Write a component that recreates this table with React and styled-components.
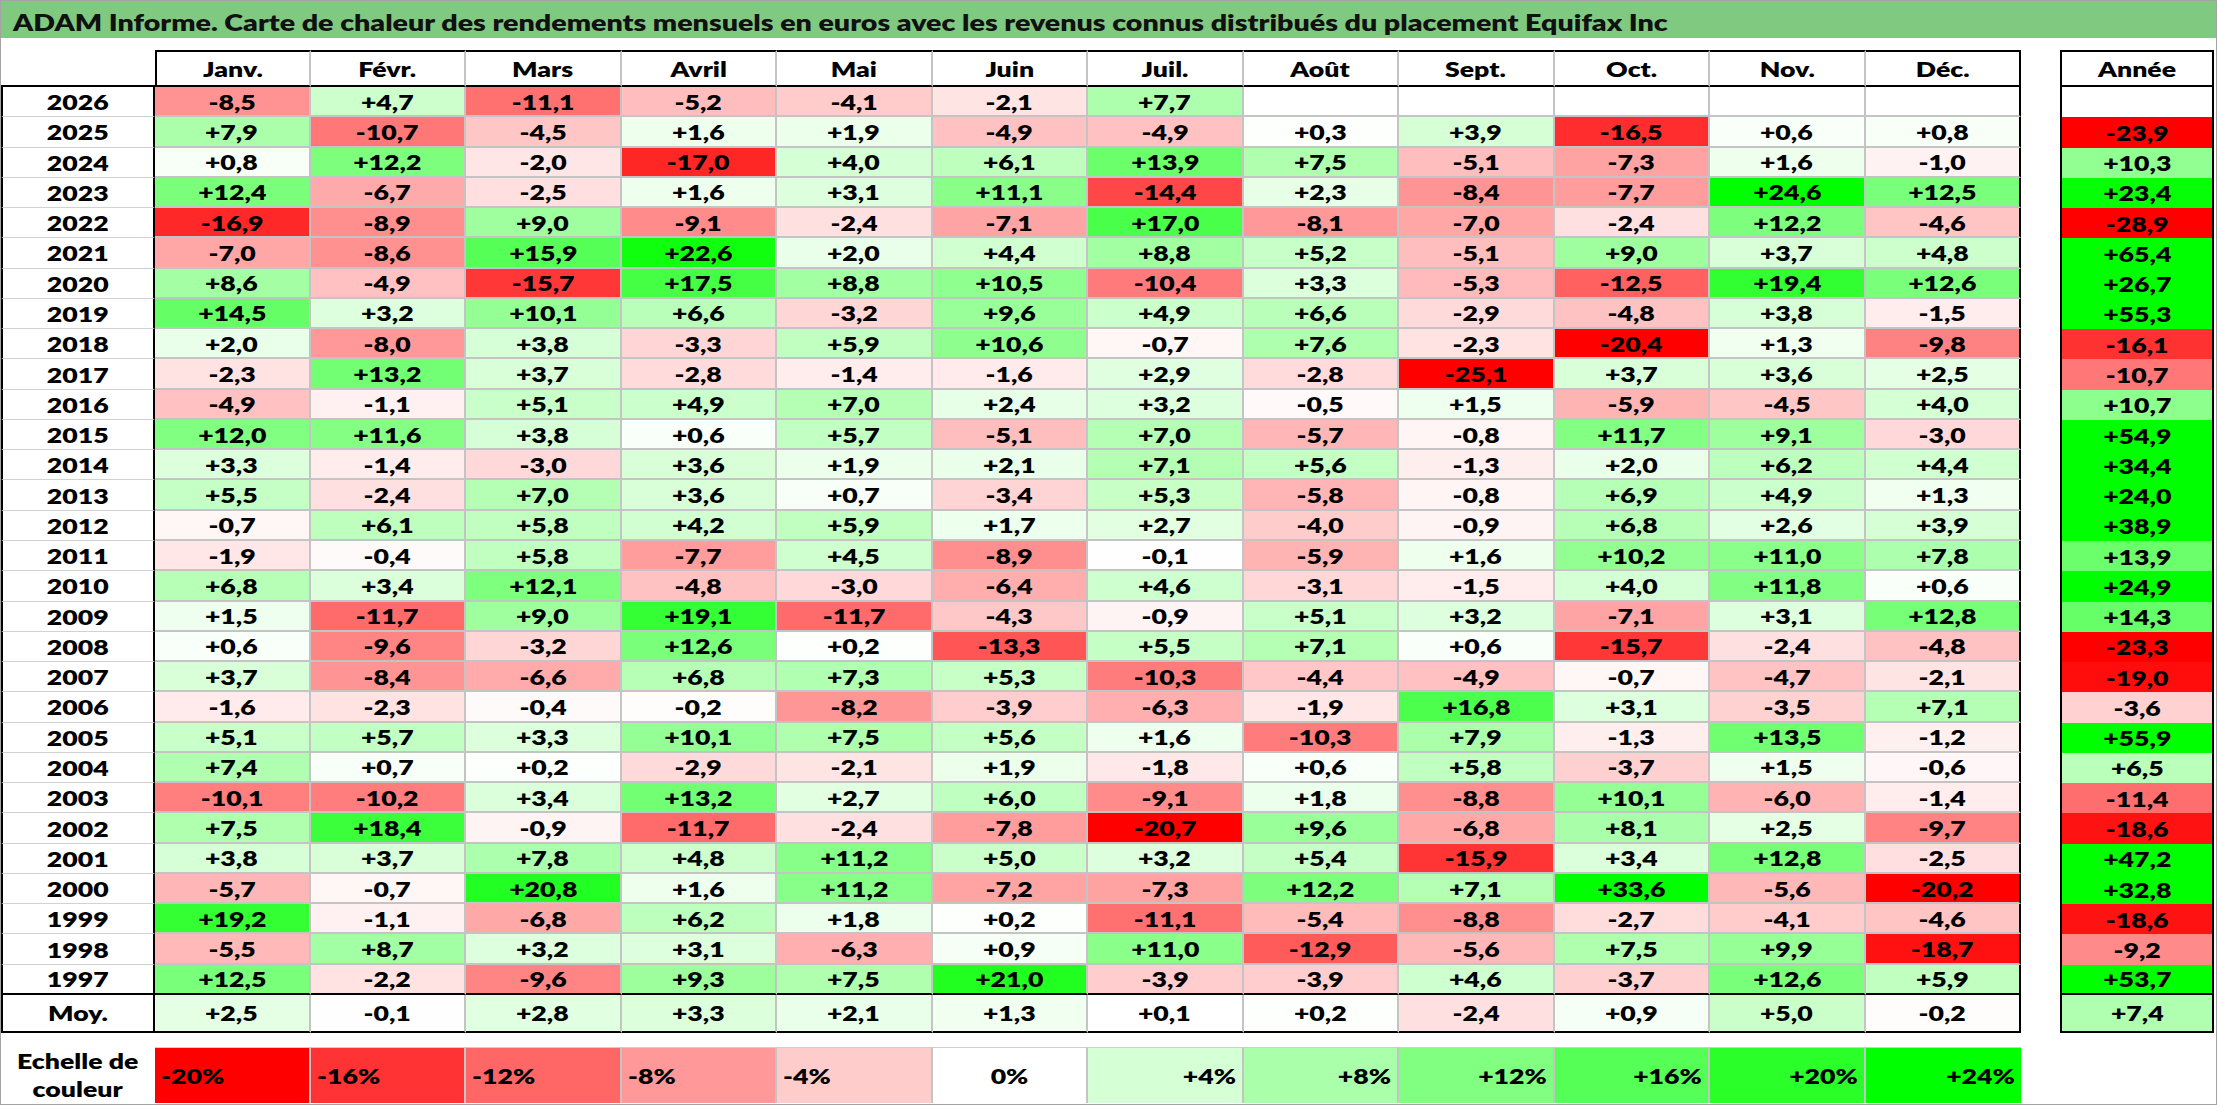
import React from 'react';
import styled, { createGlobalStyle } from 'styled-components';

const GlobalStyle = createGlobalStyle`
  html, body { margin: 0; padding: 0; background: #ffffff; }
  body { font-family: Lato, "Liberation Sans", sans-serif; color: #000; }
`;

const BLACK = '2px solid #000';
const GRAY = '2px solid #c4c4c4';
const LIGHT = '1px solid #d2d2d2';

const MONTHS = ['Janv.', 'Févr.', 'Mars', 'Avril', 'Mai', 'Juin', 'Juil.', 'Août', 'Sept.', 'Oct.', 'Nov.', 'Déc.'];

const ROWS = [
  ['2026', '-8,5 +4,7 -11,1 -5,2 -4,1 -2,1 +7,7 _ _ _ _ _ _'],
  ['2025', '+7,9 -10,7 -4,5 +1,6 +1,9 -4,9 -4,9 +0,3 +3,9 -16,5 +0,6 +0,8 -23,9'],
  ['2024', '+0,8 +12,2 -2,0 -17,0 +4,0 +6,1 +13,9 +7,5 -5,1 -7,3 +1,6 -1,0 +10,3'],
  ['2023', '+12,4 -6,7 -2,5 +1,6 +3,1 +11,1 -14,4 +2,3 -8,4 -7,7 +24,6 +12,5 +23,4'],
  ['2022', '-16,9 -8,9 +9,0 -9,1 -2,4 -7,1 +17,0 -8,1 -7,0 -2,4 +12,2 -4,6 -28,9'],
  ['2021', '-7,0 -8,6 +15,9 +22,6 +2,0 +4,4 +8,8 +5,2 -5,1 +9,0 +3,7 +4,8 +65,4'],
  ['2020', '+8,6 -4,9 -15,7 +17,5 +8,8 +10,5 -10,4 +3,3 -5,3 -12,5 +19,4 +12,6 +26,7'],
  ['2019', '+14,5 +3,2 +10,1 +6,6 -3,2 +9,6 +4,9 +6,6 -2,9 -4,8 +3,8 -1,5 +55,3'],
  ['2018', '+2,0 -8,0 +3,8 -3,3 +5,9 +10,6 -0,7 +7,6 -2,3 -20,4 +1,3 -9,8 -16,1'],
  ['2017', '-2,3 +13,2 +3,7 -2,8 -1,4 -1,6 +2,9 -2,8 -25,1 +3,7 +3,6 +2,5 -10,7'],
  ['2016', '-4,9 -1,1 +5,1 +4,9 +7,0 +2,4 +3,2 -0,5 +1,5 -5,9 -4,5 +4,0 +10,7'],
  ['2015', '+12,0 +11,6 +3,8 +0,6 +5,7 -5,1 +7,0 -5,7 -0,8 +11,7 +9,1 -3,0 +54,9'],
  ['2014', '+3,3 -1,4 -3,0 +3,6 +1,9 +2,1 +7,1 +5,6 -1,3 +2,0 +6,2 +4,4 +34,4'],
  ['2013', '+5,5 -2,4 +7,0 +3,6 +0,7 -3,4 +5,3 -5,8 -0,8 +6,9 +4,9 +1,3 +24,0'],
  ['2012', '-0,7 +6,1 +5,8 +4,2 +5,9 +1,7 +2,7 -4,0 -0,9 +6,8 +2,6 +3,9 +38,9'],
  ['2011', '-1,9 -0,4 +5,8 -7,7 +4,5 -8,9 -0,1 -5,9 +1,6 +10,2 +11,0 +7,8 +13,9'],
  ['2010', '+6,8 +3,4 +12,1 -4,8 -3,0 -6,4 +4,6 -3,1 -1,5 +4,0 +11,8 +0,6 +24,9'],
  ['2009', '+1,5 -11,7 +9,0 +19,1 -11,7 -4,3 -0,9 +5,1 +3,2 -7,1 +3,1 +12,8 +14,3'],
  ['2008', '+0,6 -9,6 -3,2 +12,6 +0,2 -13,3 +5,5 +7,1 +0,6 -15,7 -2,4 -4,8 -23,3'],
  ['2007', '+3,7 -8,4 -6,6 +6,8 +7,3 +5,3 -10,3 -4,4 -4,9 -0,7 -4,7 -2,1 -19,0'],
  ['2006', '-1,6 -2,3 -0,4 -0,2 -8,2 -3,9 -6,3 -1,9 +16,8 +3,1 -3,5 +7,1 -3,6'],
  ['2005', '+5,1 +5,7 +3,3 +10,1 +7,5 +5,6 +1,6 -10,3 +7,9 -1,3 +13,5 -1,2 +55,9'],
  ['2004', '+7,4 +0,7 +0,2 -2,9 -2,1 +1,9 -1,8 +0,6 +5,8 -3,7 +1,5 -0,6 +6,5'],
  ['2003', '-10,1 -10,2 +3,4 +13,2 +2,7 +6,0 -9,1 +1,8 -8,8 +10,1 -6,0 -1,4 -11,4'],
  ['2002', '+7,5 +18,4 -0,9 -11,7 -2,4 -7,8 -20,7 +9,6 -6,8 +8,1 +2,5 -9,7 -18,6'],
  ['2001', '+3,8 +3,7 +7,8 +4,8 +11,2 +5,0 +3,2 +5,4 -15,9 +3,4 +12,8 -2,5 +47,2'],
  ['2000', '-5,7 -0,7 +20,8 +1,6 +11,2 -7,2 -7,3 +12,2 +7,1 +33,6 -5,6 -20,2 +32,8'],
  ['1999', '+19,2 -1,1 -6,8 +6,2 +1,8 +0,2 -11,1 -5,4 -8,8 -2,7 -4,1 -4,6 -18,6'],
  ['1998', '-5,5 +8,7 +3,2 +3,1 -6,3 +0,9 +11,0 -12,9 -5,6 +7,5 +9,9 -18,7 -9,2'],
  ['1997', '+12,5 -2,2 -9,6 +9,3 +7,5 +21,0 -3,9 -3,9 +4,6 -3,7 +12,6 +5,9 +53,7'],
  ['Moy.', '+2,5 -0,1 +2,8 +3,3 +2,1 +1,3 +0,1 +0,2 -2,4 +0,9 +5,0 -0,2 +7,4'],
].map(([label, s]) => ({ label, values: s.split(' ').map((v) => (v === '_' ? '' : v)) }));

const LEGEND = [-20, -16, -12, -8, -4, 0, 4, 8, 12, 16, 20, 24];

const heat = (v) => {
  if (v === null || Number.isNaN(v)) return '#ffffff';
  if (v < 0) {
    const t = Math.min(-v / 20, 1);
    const c = Math.round(255 * (1 - t));
    return `rgb(255,${c},${c})`;
  }
  const t = Math.min(v / 24, 1);
  const c = Math.round(255 * (1 - t));
  return `rgb(${c},255,${c})`;
};

const num = (s) => (s === '' ? null : parseFloat(s.replace(',', '.')));

const Page = styled.div`
  width: 2217px;
  height: 1105px;
  box-sizing: border-box;
  border: 1px solid #a3a3a3;
  display: flex;
  flex-direction: column;
  background: #ffffff;
  overflow: hidden;
`;

const TitleBar = styled.div`
  height: 37px;
  flex: none;
  background: #80c980;
  display: flex;
  align-items: center;
  padding: 6px 0 0 12px;
  box-sizing: border-box;
  font-size: 22px;
  font-weight: 800;
  color: #111;
  white-space: nowrap;
`;

const Stretch = styled.span`
  display: inline-block;
  white-space: nowrap;
  transform: scaleX(1.3);
  transform-origin: ${(p) => p.$origin || 'center'};
`;

const Grid = styled.div`
  margin-top: 12px;
  display: grid;
  grid-template-columns: 154px repeat(12, 155.5px) 39px 154px;
  grid-template-rows: 37px repeat(30, 30.27px) 38px 14px 56px;
  font-size: 20.5px;
  font-weight: 800;
`;

const BaseCell = styled.div`
  box-sizing: border-box;
  display: flex;
  align-items: center;
  justify-content: center;
  overflow: visible;
  padding-top: 1px;
`;

const Corner = styled(BaseCell)`
  border-bottom: ${BLACK};
`;

const MonthHead = styled(BaseCell)`
  border-top: ${BLACK};
  border-bottom: ${BLACK};
  border-left: ${(p) => (p.$first ? BLACK : 'none')};
  border-right: ${(p) => (p.$last ? BLACK : GRAY)};
`;

const Spacer = styled.div``;

const TotalHead = styled(BaseCell)`
  border: ${BLACK};
`;

const YearLabel = styled(BaseCell)`
  border-left: ${BLACK};
  border-right: ${BLACK};
  border-bottom: ${(p) => (p.$dark ? BLACK : LIGHT)};
`;

const ValueCell = styled(BaseCell)`
  background: ${(p) => p.$bg};
  border-right: ${(p) => (p.$last ? BLACK : GRAY)};
  border-bottom: ${(p) => (p.$dark ? BLACK : GRAY)};
`;

const TotalCell = styled(BaseCell)`
  background: ${(p) => p.$bg};
  border-left: ${BLACK};
  border-right: ${BLACK};
  border-bottom: ${(p) => (p.$dark ? BLACK : 'none')};
`;

const LegendLabel = styled(BaseCell)`
  flex-direction: column;
  line-height: 28px;
  text-align: center;
`;

const LegendCell = styled(BaseCell)`
  background: ${(p) => p.$bg};
  border-top: 1px solid #cfcfcf;
  border-right: ${(p) => (p.$last ? 'none' : GRAY)};
  justify-content: ${(p) => p.$justify};
  padding: 1px 6px 0 6px;
`;

const originFor = (j) => (j === 'flex-start' ? 'left' : j === 'flex-end' ? 'right' : 'center');

export default function App() {
  const lastIdx = ROWS.length - 1;
  return (
    <>
      <GlobalStyle />
      <Page>
        <TitleBar>
          <Stretch $origin="left">
            ADAM Informe. Carte de chaleur des rendements mensuels en euros avec les revenus connus distribués du placement Equifax Inc
          </Stretch>
        </TitleBar>
        <Grid>
          <Corner />
          {MONTHS.map((m, i) => (
            <MonthHead key={m} $first={i === 0} $last={i === 11}>
              <Stretch>{m}</Stretch>
            </MonthHead>
          ))}
          <Spacer />
          <TotalHead>
            <Stretch>Année</Stretch>
          </TotalHead>

          {ROWS.map((row, r) => {
            const dark = r >= lastIdx - 1;
            const months = row.values.slice(0, 12);
            const total = row.values[12];
            return (
              <React.Fragment key={row.label}>
                <YearLabel $dark={dark}>
                  <Stretch>{row.label}</Stretch>
                </YearLabel>
                {months.map((v, i) => (
                  <ValueCell key={i} $bg={heat(num(v))} $last={i === 11} $dark={dark}>
                    <Stretch>{v}</Stretch>
                  </ValueCell>
                ))}
                <Spacer />
                <TotalCell $bg={heat(num(total))} $dark={dark}>
                  <Stretch>{total}</Stretch>
                </TotalCell>
              </React.Fragment>
            );
          })}

          {Array.from({ length: 15 }).map((_, i) => (
            <Spacer key={`gap-${i}`} />
          ))}

          <LegendLabel>
            <Stretch>Echelle de</Stretch>
            <Stretch>couleur</Stretch>
          </LegendLabel>
          {LEGEND.map((v, i) => {
            const justify = v < 0 ? 'flex-start' : v === 0 ? 'center' : 'flex-end';
            return (
              <LegendCell key={v} $bg={heat(v)} $last={i === 11} $justify={justify}>
                <Stretch $origin={originFor(justify)}>{v > 0 ? `+${v}%` : `${v}%`}</Stretch>
              </LegendCell>
            );
          })}
          <Spacer />
          <Spacer />
        </Grid>
      </Page>
    </>
  );
}
